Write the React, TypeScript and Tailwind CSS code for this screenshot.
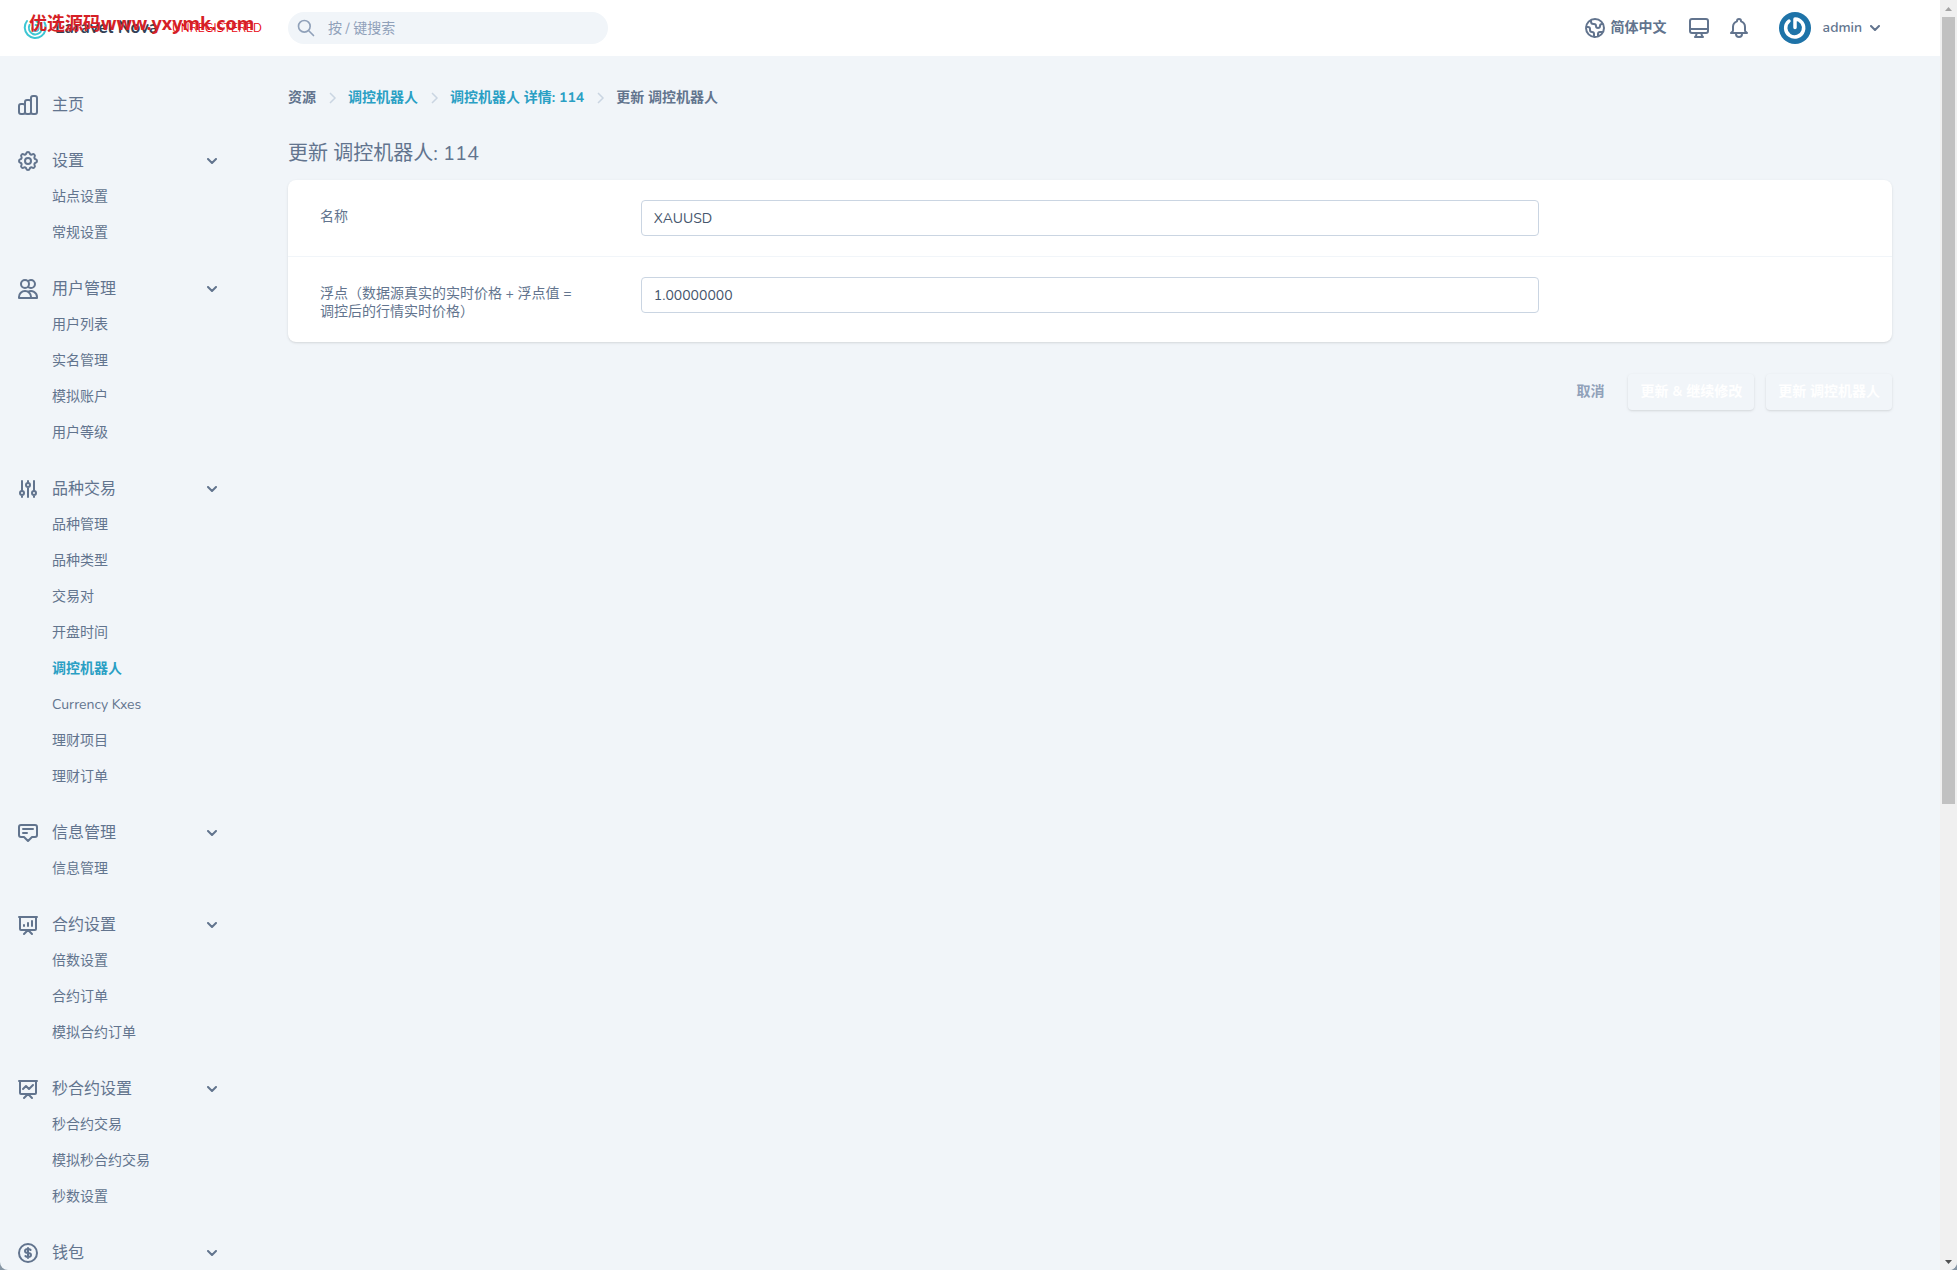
import type { ComponentType, ReactNode } from "react";
import {
  HiOutlineAdjustments,
  HiOutlineAnnotation,
  HiOutlineBell,
  HiOutlineChartBar,
  HiOutlineCog,
  HiOutlineCurrencyDollar,
  HiOutlineDesktopComputer,
  HiOutlineGlobe,
  HiOutlinePresentationChartBar,
  HiOutlinePresentationChartLine,
  HiOutlineSearch,
  HiOutlineUsers,
} from "react-icons/hi";

type Section = {
  title: string;
  icon: ComponentType<{ className?: string }>;
  items: string[];
};

const activeItem = "调控机器人";

const sections: Section[] = [
  { title: "主页", icon: HiOutlineChartBar, items: [] },
  { title: "设置", icon: HiOutlineCog, items: ["站点设置", "常规设置"] },
  {
    title: "用户管理",
    icon: HiOutlineUsers,
    items: ["用户列表", "实名管理", "模拟账户", "用户等级"],
  },
  {
    title: "品种交易",
    icon: HiOutlineAdjustments,
    items: [
      "品种管理",
      "品种类型",
      "交易对",
      "开盘时间",
      "调控机器人",
      "Currency Kxes",
      "理财项目",
      "理财订单",
    ],
  },
  { title: "信息管理", icon: HiOutlineAnnotation, items: ["信息管理"] },
  {
    title: "合约设置",
    icon: HiOutlinePresentationChartBar,
    items: ["倍数设置", "合约订单", "模拟合约订单"],
  },
  {
    title: "秒合约设置",
    icon: HiOutlinePresentationChartLine,
    items: ["秒合约交易", "模拟秒合约交易", "秒数设置"],
  },
  { title: "钱包", icon: HiOutlineCurrencyDollar, items: [] },
];

function ChevronDown() {
  return (
    <svg viewBox="0 0 10 6" className="h-[6px] w-[10px] shrink-0" aria-hidden="true">
      <path
        d="M1 1l4 4 4-4"
        fill="none"
        stroke="currentColor"
        strokeWidth="2"
        strokeLinecap="round"
        strokeLinejoin="round"
      />
    </svg>
  );
}

function Logo() {
  return (
    <a href="#" className="relative flex w-[241px] items-center">
      <svg viewBox="0 0 24 24" className="size-6 shrink-0" fill="none" aria-hidden="true">
        <g stroke="#3ec6d3" strokeWidth="2" strokeLinecap="round">
          <path d="M4 5a10.500 10.500 0 1 0 17.500 1.500" />
          <path d="M6.500 9a6.500 6.500 0 1 0 7-3.500" />
          <path d="M9.500 12a3 3 0 1 0 3-3" />
        </g>
      </svg>
      <span className="ml-2 text-[17px] font-bold text-[#334155]">Laravel Nova</span>
      <span className="ml-[14px] text-xs text-red-600">UNREGISTERED</span>
      <span className="absolute -top-1 left-[6px] font-['Noto_Sans','Noto_Sans_CJK_SC',sans-serif] text-[18px] leading-6 font-bold whitespace-nowrap text-[#d61f26]">
        优选源码www.yxymk.com
      </span>
    </a>
  );
}

function Header() {
  return (
    <header className="flex h-14 shrink-0 items-center bg-white pr-[60px] pl-[23px]">
      <Logo />
      <div className="relative ml-6 w-80">
        <HiOutlineSearch className="absolute top-[6px] left-2 size-5 text-slate-400" />
        <input
          type="search"
          aria-label="搜索"
          placeholder="按 / 键搜索"
          className="h-8 w-full rounded-full bg-slate-100 pr-4 pl-10 text-sm placeholder:text-slate-400"
        />
      </div>

      <div className="ml-auto flex items-center">
        <button type="button" className="flex items-center gap-1 text-sm font-bold">
          <HiOutlineGlobe className="size-6" />
          简体中文
        </button>
        <button type="button" aria-label="主题" className="ml-5">
          <HiOutlineDesktopComputer className="size-6" />
        </button>
        <button type="button" aria-label="通知" className="ml-4">
          <HiOutlineBell className="size-6" />
        </button>
        <button type="button" className="ml-7 flex items-center text-sm font-semibold">
          <Avatar />
          <span className="mr-2 ml-3">admin</span>
          <ChevronDown />
        </button>
      </div>
    </header>
  );
}

function Avatar() {
  return (
    <svg viewBox="0 0 32 32" className="size-8 shrink-0" fill="none" aria-hidden="true">
      <circle cx="16" cy="16" r="16" fill="#1e73a8" />
      <path
        d="M10 9a9 9 0 1 0 6-2v8.500"
        stroke="#fff"
        strokeWidth="3.500"
        strokeLinecap="round"
        strokeLinejoin="round"
      />
    </svg>
  );
}

function Sidebar() {
  return (
    <nav className="flex w-60 shrink-0 flex-col gap-5 pt-[31px] pr-[23px] pl-4">
      {sections.map(({ title, icon: Icon, items }) => (
        <div key={title}>
          <button type="button" className="flex h-9 w-full items-center text-left">
            <Icon className="size-6 shrink-0" />
            <span className="ml-3 flex-1 text-base">{title}</span>
            {title !== "主页" && <ChevronDown />}
          </button>
          {items.map((item) => (
            <a
              key={item}
              href="#"
              className={
                item === activeItem
                  ? "ml-9 flex h-9 items-center text-sm font-bold text-[#2a9fc4]"
                  : "ml-9 flex h-9 items-center text-sm"
              }
            >
              {item}
            </a>
          ))}
        </div>
      ))}
    </nav>
  );
}

function Separator() {
  return (
    <svg viewBox="0 0 16 16" className="mx-2 size-4 text-slate-300" fill="none" aria-hidden="true">
      <path d="M6 3l5 5-5 5" stroke="currentColor" strokeWidth="1.500" />
    </svg>
  );
}

function Breadcrumbs() {
  return (
    <div className="flex h-5 items-center text-sm font-bold">
      <span>资源</span>
      <Separator />
      <a href="#" className="text-[#2a9fc4]">调控机器人</a>
      <Separator />
      <a href="#" className="text-[#2a9fc4]">调控机器人 详情: 114</a>
      <Separator />
      <span>更新 调控机器人</span>
    </div>
  );
}

type FieldProps = { id: string; value: string; children: ReactNode };

function Field({ id, value, children }: FieldProps) {
  return (
    <div className="flex py-5">
      <div className="w-1/5 px-8 pt-2">
        <label htmlFor={id} className="block text-sm leading-[18px]">
          {children}
        </label>
      </div>
      <div className="w-3/5 px-8">
        <input
          id={id}
          type="text"
          defaultValue={value}
          className="block h-9 w-full rounded border border-slate-300 bg-white px-3 text-sm text-slate-600"
        />
      </div>
    </div>
  );
}

function Scrollbar() {
  return (
    <div className="flex w-[17px] shrink-0 flex-col items-center justify-between bg-[#f0f0f0]" aria-hidden="true">
      <svg viewBox="0 0 17 17" className="size-[17px]">
        <path d="M5 11l3.500-4 3.500 4z" fill="#a3a3a3" />
      </svg>
      <div className="flex w-[13px] flex-1 flex-col">
        <div className="h-7/11 bg-[#c1c1c1]" />
      </div>
      <svg viewBox="0 0 17 17" className="size-[17px]">
        <path d="M5 7l3.500 4 3.500-4z" fill="#505050" />
      </svg>
    </div>
  );
}

export default function App() {
  return (
    <div className="h-screen bg-[#8796a5]">
      <div className="flex h-full overflow-hidden rounded-b-lg bg-slate-100 font-['Nunito','Lato','Noto_Sans_CJK_SC',sans-serif] text-slate-500">
        <div className="flex min-w-0 flex-1 flex-col">
          <Header />
          <div className="flex min-h-0 flex-1">
            <Sidebar />
            <main className="min-w-0 flex-1 px-12 pt-8">
              <Breadcrumbs />
              <form>
                <h1 className="mt-8 mb-3 text-xl leading-7">更新 调控机器人: 114</h1>
                <div className="divide-y divide-slate-100 rounded-lg bg-white pb-px shadow">
                  <Field id="name" value="XAUUSD">名称</Field>
                  <Field id="float" value="1.00000000">
                    浮点（数据源真实的实时价格 + 浮点值 = 调控后的行情实时价格）
                  </Field>
                </div>
                <div className="mt-8 flex items-center justify-end gap-3 text-sm font-bold">
                  <button type="button" className="mr-3 text-slate-400">取消</button>
                  <button type="submit" className="h-9 rounded px-3 text-white shadow">
                    更新 &amp; 继续修改
                  </button>
                  <button type="submit" className="h-9 rounded px-3 text-white shadow">
                    更新 调控机器人
                  </button>
                </div>
              </form>
            </main>
          </div>
        </div>
        <Scrollbar />
      </div>
    </div>
  );
}
